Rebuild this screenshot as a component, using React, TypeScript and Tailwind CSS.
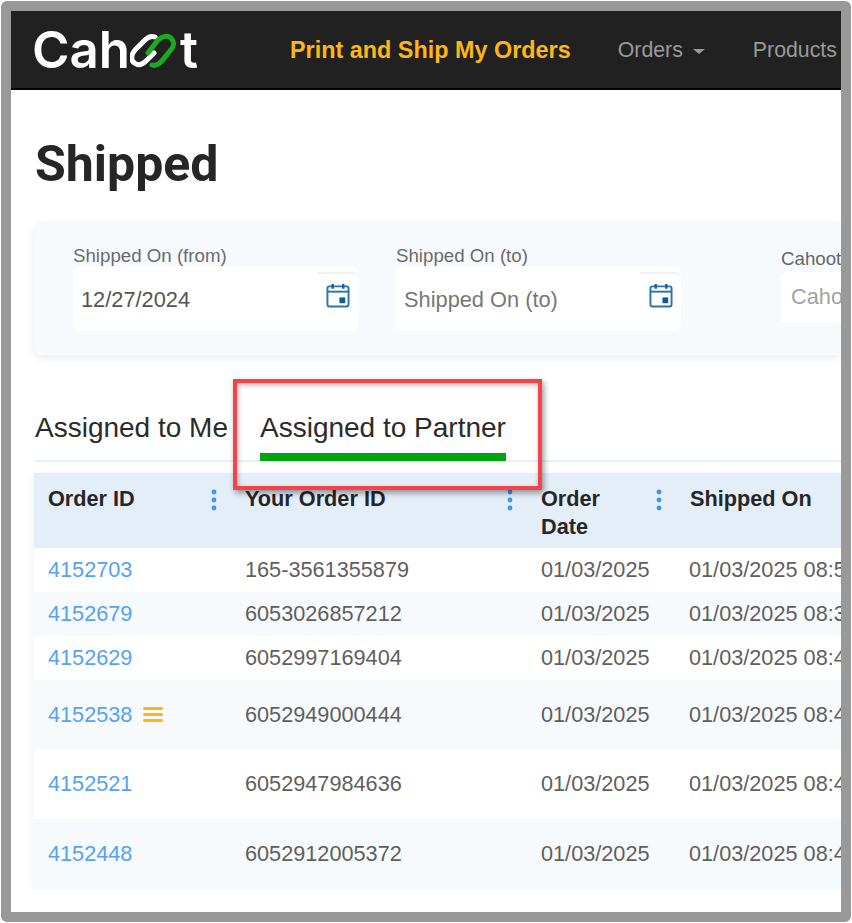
import React from "react";

const rows = [
  { id: "4152703", yours: "165-3561355879", date: "01/03/2025", shipped: "01/03/2025 08:58 AM", h: "h-[44px]", tint: false },
  { id: "4152679", yours: "6053026857212", date: "01/03/2025", shipped: "01/03/2025 08:37 AM", h: "h-[44px]", tint: true },
  { id: "4152629", yours: "6052997169404", date: "01/03/2025", shipped: "01/03/2025 08:45 AM", h: "h-[44px]", tint: false },
  { id: "4152538", yours: "6052949000444", date: "01/03/2025", shipped: "01/03/2025 08:45 AM", h: "h-[70px]", tint: true, flag: true },
  { id: "4152521", yours: "6052947984636", date: "01/03/2025", shipped: "01/03/2025 08:45 AM", h: "h-[69px]", tint: false },
  { id: "4152448", yours: "6052912005372", date: "01/03/2025", shipped: "01/03/2025 08:45 AM", h: "h-[70px]", tint: true },
];

function CalendarIcon() {
  return (
    <svg width="24" height="25" viewBox="0 0 25 26" fill="none" className="shrink-0">
      <rect x="1.5" y="3.5" width="22" height="21" rx="2" stroke="#2a74a8" strokeWidth="2" />
      <path d="M1.5 9h22" stroke="#2a74a8" strokeWidth="2" />
      <path d="M7 1v5M18 1v5" stroke="#15609a" strokeWidth="2.5" />
      <rect x="14" y="15" width="6" height="6" fill="#0f5a96" />
    </svg>
  );
}

function Dots() {
  return (
    <svg width="6" height="22" viewBox="0 0 6 22" className="shrink-0">
      <circle cx="3" cy="3" r="2.4" fill="#3d94f0" />
      <circle cx="3" cy="11" r="2.4" fill="#3d94f0" />
      <circle cx="3" cy="19" r="2.4" fill="#3d94f0" />
    </svg>
  );
}

function DateField({ label, value, placeholder }: { label: string; value?: string; placeholder?: string }) {
  return (
    <div className="flex w-[285px] shrink-0 flex-col">
      <div className="h-[22px] text-[18.7px] leading-[22px] text-[#6b6b6b]">{label}</div>
      <div className="flex h-[64px] items-stretch rounded-md bg-white pl-[8px]">
        <div className={`flex flex-1 items-center pt-[2px] text-[21.8px] ${value ? "text-[#555]" : "text-[#777]"}`}>
          {value ?? placeholder}
        </div>
        <div className="mt-[5px] flex w-[41px] justify-start rounded-tr-md border-t-2 border-[#f0f0f0] pl-[9px] pt-[9px]">
          <CalendarIcon />
        </div>
      </div>
    </div>
  );
}

export default function App() {
  return (
    <div className="h-[923px] w-[852px] overflow-hidden bg-white p-[1px] font-['Liberation_Sans',sans-serif]">
      <div className="relative h-[921px] w-[850px] overflow-hidden rounded-[6px] border-[10px] border-[#999999] bg-white">
        <header className="flex h-[79px] items-center overflow-hidden whitespace-nowrap border-b-[2px] border-black bg-[#212121]">
          <div className="ml-[21px] flex w-[258px] shrink-0 items-center font-['Inter',sans-serif] text-[51px] font-semibold leading-none text-white">
            <span>Cah</span>
            <svg width="46" height="36" viewBox="0 0 46 36" fill="none" className="mt-[3px] shrink-0">
              <path d="M25 4 C21 2.500 18 4 15 7 L5 17 C0 23 1 29 6 31 C10 33 13 31 16 28 L24 20" stroke="#ffffff" strokeWidth="5" strokeLinecap="round" />
              <path d="M18 20 L28 7 C32 3 38 2 41 5 C45 9 44 14 40 18 L31 29 C28 32 25 33 22 32" stroke="#18ad1c" strokeWidth="5" strokeLinecap="round" />
            </svg>
            <span className="ml-[4px]">t</span>
          </div>
          <span className="pt-[2px] text-[23.4px] font-bold text-[#fdb714]">Print and Ship My Orders</span>
          <span className="ml-[47px] flex items-center pt-[2px] text-[21.3px] text-[#9a9a9a]">
            Orders
            <span className="ml-[10px] mt-[2px] h-0 w-0 border-x-[6px] border-t-[5px] border-x-transparent border-t-[#9a9a9a]" />
          </span>
          <span className="ml-[48px] pt-[2px] text-[21.3px] text-[#9a9a9a]">Products</span>
        </header>

        <main className="pl-[24px]">
          <h1 className="mt-[46px] font-['Roboto',sans-serif] text-[50px] font-bold leading-[56px] text-[#262626]">Shipped</h1>

          <section className="-ml-[1px] mt-[30px] flex h-[133px] items-start gap-[37px] overflow-hidden rounded-l-lg bg-[#f7fafd] pl-[39px] pt-[23px] shadow-[0_3px_10px_rgba(0,0,0,0.08)]">
            <DateField label="Shipped On (from)" value="12/27/2024" />
            <div className="ml-[1px]">
              <DateField label="Shipped On (to)" placeholder="Shipped On (to)" />
            </div>
            <div className="ml-[63px] flex w-[200px] shrink-0 flex-col pt-[3px]">
              <div className="h-[21px] whitespace-nowrap text-[18.7px] leading-[21px] text-[#666]">Cahoot Order ID</div>
              <div className="mt-[3px] flex h-[51px] items-center rounded-md bg-white pl-[10px] text-[21.8px] text-[#a3a3a3]">
                Cahoot Order ID
              </div>
            </div>
          </section>

          <nav className="mt-[23px] flex h-[84px] items-start whitespace-nowrap border-b-2 border-[#e6f0f7] text-[28px] text-[#2b2b2b]">
            <div className="pt-[32px] leading-[36px]">Assigned to Me</div>
            <div className="ml-[32px] flex h-[84px] flex-col pt-[32px]">
              <div className="leading-[36px]">Assigned to Partner</div>
              <div className="mt-[7px] h-[8px] w-full bg-[#00a60e]" />
            </div>
          </nav>

          <div className="-ml-[1px] mt-[11px] w-[821px] text-[21.7px] text-[#5f5f5f] shadow-[-4px_0_6px_rgba(0,0,0,0.03)]">
            <div className="grid h-[75px] grid-cols-[197px_296px_149px_1fr] bg-[#e4eef9] text-[21.7px] font-bold leading-[28px] text-[#262626]">
              <div className="flex items-start justify-between pl-[14px] pr-[14px] pt-[12px]">
                Order ID
                <span className="mt-[4px]"><Dots /></span>
              </div>
              <div className="flex items-start justify-between pl-[14px] pr-[14px] pt-[12px]">
                Your Order ID
                <span className="mt-[4px]"><Dots /></span>
              </div>
              <div className="flex items-start justify-between pl-[14px] pr-[14px] pt-[12px]">
                <span className="w-[70px]">Order Date</span>
                <span className="mt-[4px]"><Dots /></span>
              </div>
              <div className="pl-[14px] pt-[12px]">Shipped On</div>
            </div>
            {rows.map((row) => (
              <div
                key={row.id}
                className={`grid grid-cols-[197px_296px_149px_1fr] items-center whitespace-nowrap ${row.h} ${row.tint ? "bg-[#f7fafd]" : "bg-white"}`}
              >
                <div className="flex items-center pl-[14px] text-[#55a2f5]">
                  {row.id}
                  {row.flag ? (
                    <span className="ml-[11px] flex w-[20px] flex-col gap-[3px]">
                      <span className="h-[3px] rounded-full bg-[#fdb714]" />
                      <span className="h-[3px] rounded-full bg-[#fdb714]" />
                      <span className="h-[3px] rounded-full bg-[#fdb714]" />
                    </span>
                  ) : null}
                </div>
                <div className="pl-[14px]">{row.yours}</div>
                <div className="pl-[14px]">{row.date}</div>
                <div className="pl-[13px]">{row.shipped}</div>
              </div>
            ))}
          </div>
        </main>

        {/* callout round the active tab */}
        <div className="absolute left-[222px] top-[368px] h-[111px] w-[309px] border-[4px] border-[#f54449] shadow-[2px_3px_6px_rgba(0,0,0,0.4),inset_1px_2px_5px_rgba(0,0,0,0.3)]" />
      </div>
    </div>
  );
}
